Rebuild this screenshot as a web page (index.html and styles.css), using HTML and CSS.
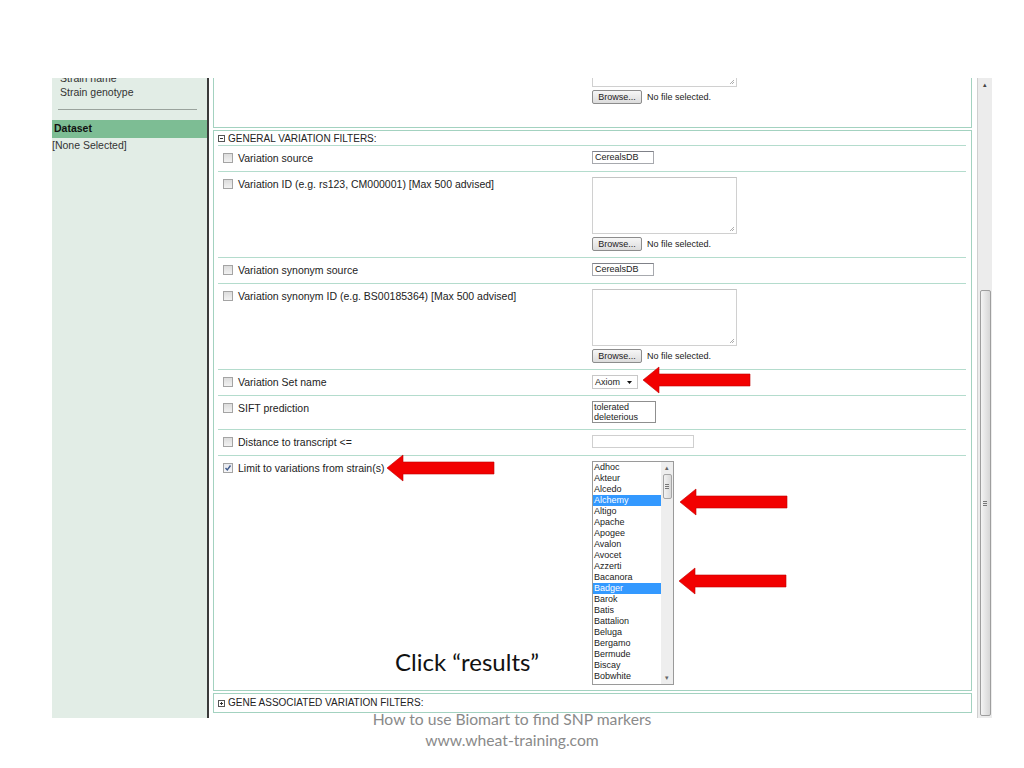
FILE: index.html
```html
<!DOCTYPE html>
<html>
<head>
<meta charset="utf-8">
<link rel="stylesheet" href="styles.css">
</head>
<body>
<div class="page">
  <div class="shot">
    <aside class="side">
      <div class="side-item first">Strain name</div>
      <div class="side-item">Strain genotype</div>
      <div class="side-sep"></div>
      <div class="side-head">Dataset</div>
      <div class="side-val">[None Selected]</div>
    </aside>
    <div class="divider"></div>
    <main class="main">
      <section class="panel panel-top">
        <div class="row last top-row">
          <div class="lab"></div>
          <div class="ctl">
            <div class="ta"><svg class="grip" width="6" height="6" viewBox="0 0 6 6"><path d="M5 1 L1 5 M5 3 L3 5" stroke="#999" stroke-width="0.8"/></svg></div>
            <div class="file"><span class="btn">Browse...</span><span class="nofile">No file selected.</span></div>
          </div>
        </div>
      </section>

      <section class="panel">
        <div class="phead"><svg class="tog" width="7" height="7" viewBox="0 0 7 7"><rect x="0.5" y="0.5" width="6" height="6" fill="#fff" stroke="#555"/><path d="M2 3.5 H5" stroke="#333"/></svg><span>GENERAL VARIATION FILTERS:</span></div>

        <div class="row">
          <div class="lab"><span class="cb"></span>Variation source</div>
          <div class="ctl"><div class="inp w62">CerealsDB</div></div>
        </div>

        <div class="row">
          <div class="lab"><span class="cb"></span>Variation ID (e.g. rs123, CM000001) [Max 500 advised]</div>
          <div class="ctl">
            <div class="ta"><svg class="grip" width="6" height="6" viewBox="0 0 6 6"><path d="M5 1 L1 5 M5 3 L3 5" stroke="#999" stroke-width="0.8"/></svg></div>
            <div class="file"><span class="btn">Browse...</span><span class="nofile">No file selected.</span></div>
          </div>
        </div>

        <div class="row">
          <div class="lab"><span class="cb"></span>Variation synonym source</div>
          <div class="ctl"><div class="inp w62">CerealsDB</div></div>
        </div>

        <div class="row">
          <div class="lab"><span class="cb"></span>Variation synonym ID (e.g. BS00185364) [Max 500 advised]</div>
          <div class="ctl">
            <div class="ta"><svg class="grip" width="6" height="6" viewBox="0 0 6 6"><path d="M5 1 L1 5 M5 3 L3 5" stroke="#999" stroke-width="0.8"/></svg></div>
            <div class="file"><span class="btn">Browse...</span><span class="nofile">No file selected.</span></div>
          </div>
        </div>

        <div class="row">
          <div class="lab"><span class="cb"></span>Variation Set name</div>
          <div class="ctl"><div class="sel">Axiom<svg width="5" height="3" viewBox="0 0 5 3"><path d="M0 0 H5 L2.5 3 Z" fill="#111"/></svg></div></div>
        </div>

        <div class="row">
          <div class="lab"><span class="cb"></span>SIFT prediction</div>
          <div class="ctl"><div class="sift"><div>tolerated</div><div>deleterious</div></div></div>
        </div>

        <div class="row">
          <div class="lab"><span class="cb"></span>Distance to transcript &lt;=</div>
          <div class="ctl"><div class="inp w102 light"></div></div>
        </div>

        <div class="row last strains">
          <div class="lab"><span class="cb on"><svg width="8" height="8" viewBox="0 0 8 8"><path d="M1.5 4 L3.3 6 L6.5 1.5" fill="none" stroke="#3f5a8c" stroke-width="1.4"/></svg></span>Limit to variations from strain(s)</div>
          <div class="ctl">
            <div class="list">
              <div class="opts">
                <div>Adhoc</div><div>Akteur</div><div>Alcedo</div><div class="sel-o">Alchemy</div><div>Altigo</div>
                <div>Apache</div><div>Apogee</div><div>Avalon</div><div>Avocet</div><div>Azzerti</div>
                <div>Bacanora</div><div class="sel-o">Badger</div><div>Barok</div><div>Batis</div><div>Battalion</div>
                <div>Beluga</div><div>Bergamo</div><div>Bermude</div><div>Biscay</div><div>Bobwhite</div>
              </div>
              <div class="lsb">
                <div class="lsb-btn">&#9652;</div>
                <div class="lsb-thumb"><span></span><span></span><span></span></div>
                <div class="lsb-fill"></div>
                <div class="lsb-btn">&#9662;</div>
              </div>
            </div>
          </div>
        </div>
      </section>

      <section class="panel panel-gene">
        <div class="phead last"><svg class="tog" width="7" height="7" viewBox="0 0 7 7"><rect x="0.5" y="0.5" width="6" height="6" fill="#fff" stroke="#555"/><path d="M2 3.5 H5 M3.5 2 V5" stroke="#333"/></svg><span>GENE ASSOCIATED VARIATION FILTERS:</span></div>
      </section>
    </main>
    <div class="vscroll">
      <div class="vs-btn">&#9652;</div>
      <div class="vs-thumb"><span></span><span></span><span></span></div>
    </div>
  </div>

  <svg class="arrow a1" width="108" height="28" viewBox="0 0 108 28"><polygon points="0,14 16,1 16,8 107,8 107,20 16,20 16,27"/></svg>
  <svg class="arrow a2" width="108" height="28" viewBox="0 0 108 28"><polygon points="0,14 16,1 16,8 107,8 107,20 16,20 16,27"/></svg>
  <svg class="arrow a3" width="108" height="28" viewBox="0 0 108 28"><polygon points="0,14 16,1 16,8 107,8 107,20 16,20 16,27"/></svg>
  <svg class="arrow a4" width="108" height="28" viewBox="0 0 108 28"><polygon points="0,14 16,1 16,8 107,8 107,20 16,20 16,27"/></svg>

  <div class="click">Click “results”</div>

  <div class="footer">
    <div>How to use Biomart to find SNP markers</div>
    <div>www.wheat-training.com</div>
  </div>
</div>
</body>
</html>
```

FILE: styles.css
```css
html, body {
  margin: 0;
  padding: 0;
  background: #fff;
}
body {
  width: 1024px;
  height: 768px;
  overflow: hidden;
  font-family: "Liberation Sans", Arial, sans-serif;
}
.page {
  position: relative;
  width: 1024px;
  height: 768px;
  padding-top: 78px;
  box-sizing: border-box;
}
.shot {
  margin-left: 52px;
  width: 940px;
  height: 640px;
  display: flex;
  overflow: hidden;
}

/* sidebar */
.side {
  width: 155px;
  flex: none;
  background: #e2ede6;
  font-size: 10.5px;
  color: #333;
  overflow: hidden;
}
.side-item {
  padding-left: 8px;
  line-height: 14px;
  height: 14px;
}
.side-item.first {
  margin-top: -7px;
}
.side-sep {
  margin: 10px 0 0 6px;
  width: 139px;
  height: 1px;
  background: #9aa39d;
}
.side-head {
  margin-top: 10px;
  height: 18px;
  line-height: 17px;
  background: #7dbd94;
  font-weight: bold;
  color: #111;
  padding-left: 2px;
}
.side-val {
  line-height: 15px;
  color: #333;
}
.divider {
  width: 2px;
  flex: none;
  background: #3a3a3a;
}

/* main */
.main {
  width: 768px;
  flex: none;
  background: #fff;
  overflow: hidden;
}
.panel {
  margin: 2px 5px 0 4px;
  border: 1px solid #a3d2c0;
  padding: 0 5px 0 4px;
  color: #222;
}
.panel-top {
  margin-top: -54px;
}
.panel-gene {
  margin-top: 2px;
}
.phead {
  height: 15px;
  line-height: 13px;
  font-size: 10px;
  display: flex;
  align-items: center;
  gap: 3px;
  padding-top: 1px;
  box-sizing: border-box;
  border-bottom: 1px solid #b4dccd;
  color: #222;
}
.panel-gene .phead {
  height: 18px;
  line-height: 18px;
  padding-top: 0;
}
.phead.last {
  border-bottom: none;
}
.tog {
  flex: none;
}
.row {
  display: grid;
  grid-template-columns: 374px 1fr;
  padding: 5px 0 6px;
  border-bottom: 1px solid #b4dccd;
}
.row.last {
  border-bottom: none;
}
.row.strains {
  padding-bottom: 5px;
}
.top-row {
  padding-bottom: 23px;
}
.lab {
  display: flex;
  align-items: center;
  gap: 5px;
  padding-left: 5px;
  height: 14px;
  line-height: 14px;
  font-size: 10.5px;
  color: #222;
  white-space: nowrap;
}
.cb {
  width: 10px;
  height: 10px;
  box-sizing: border-box;
  border: 1px solid #a4a4a4;
  background: linear-gradient(#dcdcdc, #f2f2f2);
  flex: none;
  display: flex;
  align-items: center;
  justify-content: center;
}
.cb.on {
  background: linear-gradient(#e6e8ee, #f6f6f8);
}
.ctl {
  font-size: 9px;
  color: #222;
}
.inp {
  height: 13px;
  box-sizing: border-box;
  border: 1px solid #a7a9ae;
  border-top-color: #7f8188;
  line-height: 11px;
  padding-left: 2px;
  background: #fff;
}
.inp.w62 { width: 62px; }
.inp.w102 { width: 102px; }
.inp.light {
  border-color: #cfcfcf;
}
.ta {
  position: relative;
  width: 145px;
  height: 57px;
  box-sizing: border-box;
  border: 1px solid #d0d0d0;
  border-top-color: #c4c4c4;
  background: #fff;
}
.grip {
  position: absolute;
  right: 1px;
  bottom: 1px;
}
.file {
  margin-top: 3px;
  display: flex;
  align-items: center;
  gap: 5px;
  height: 14px;
}
.btn {
  width: 50px;
  height: 14px;
  box-sizing: border-box;
  border: 1px solid #8c8c8c;
  border-radius: 2px;
  background: linear-gradient(#f6f6f6, #dcdcdc);
  font-size: 9px;
  line-height: 12px;
  text-align: center;
  color: #222;
}
.nofile {
  font-size: 9px;
  color: #222;
}
.sel {
  width: 46px;
  height: 14px;
  box-sizing: border-box;
  border: 1px solid #c8c8c8;
  background: #fff;
  display: flex;
  align-items: center;
  justify-content: space-between;
  padding: 0 5px 0 2px;
  font-size: 9px;
}
.sift {
  width: 64px;
  height: 22px;
  box-sizing: border-box;
  border: 1px solid #8f8f8f;
  padding: 0 1px;
  line-height: 10px;
  font-size: 9px;
}
.list {
  width: 82px;
  height: 224px;
  box-sizing: border-box;
  border: 1px solid #9a9a9a;
  display: flex;
  background: #fff;
}
.opts {
  flex: 1;
  font-size: 9px;
  line-height: 11px;
}
.opts div {
  padding-left: 1px;
  height: 11px;
}
.opts .sel-o {
  background: #3399ff;
  color: #fff;
}
.lsb {
  width: 12px;
  flex: none;
  background: #eeeeee;
  display: flex;
  flex-direction: column;
  align-items: center;
}
.lsb-btn {
  height: 12px;
  font-size: 7px;
  line-height: 12px;
  color: #666;
}
.lsb-thumb {
  width: 9px;
  height: 25px;
  box-sizing: border-box;
  border: 1px solid #a5a5a5;
  border-radius: 2px;
  background: linear-gradient(90deg, #f2f2f2, #d9d9d9);
  display: flex;
  flex-direction: column;
  justify-content: center;
  align-items: center;
  gap: 1px;
}
.lsb-thumb span,
.vs-thumb span {
  width: 4px;
  height: 1px;
  background: #777;
}
.lsb-fill {
  flex: 1;
}

/* page scrollbar */
.vscroll {
  width: 15px;
  flex: none;
  box-sizing: border-box;
  border-left: 1px solid #cfcfcf;
  background: #ececec;
  display: flex;
  flex-direction: column;
  align-items: center;
}
.vs-btn {
  height: 14px;
  font-size: 7px;
  line-height: 14px;
  color: #444;
}
.vs-thumb {
  margin-top: auto;
  margin-bottom: 2px;
  width: 11px;
  height: 426px;
  box-sizing: border-box;
  border: 1px solid #9e9e9e;
  border-radius: 2px;
  background: linear-gradient(90deg, #f4f4f4, #d6d6d6);
  display: flex;
  flex-direction: column;
  justify-content: center;
  align-items: center;
  gap: 1px;
}

/* slide overlays */
.arrow {
  position: absolute;
}
.arrow polygon {
  fill: #f20000;
  stroke: #c00000;
  stroke-width: 0.6;
}
.a1 { left: 643px; top: 366px; }
.a2 { left: 387px; top: 454px; }
.a3 { left: 680px; top: 488px; }
.a4 { left: 679px; top: 567px; }

.click {
  position: absolute;
  left: 395px;
  top: 647px;
  font-family: Lato, "Open Sans", sans-serif;
  font-size: 24px;
  line-height: 30px;
  color: #111;
}
.footer {
  position: absolute;
  left: 0;
  top: 709px;
  width: 1024px;
  text-align: center;
  font-family: Lato, "Open Sans", sans-serif;
  font-size: 15.7px;
  line-height: 21px;
  color: #8a8a8a;
}
```
